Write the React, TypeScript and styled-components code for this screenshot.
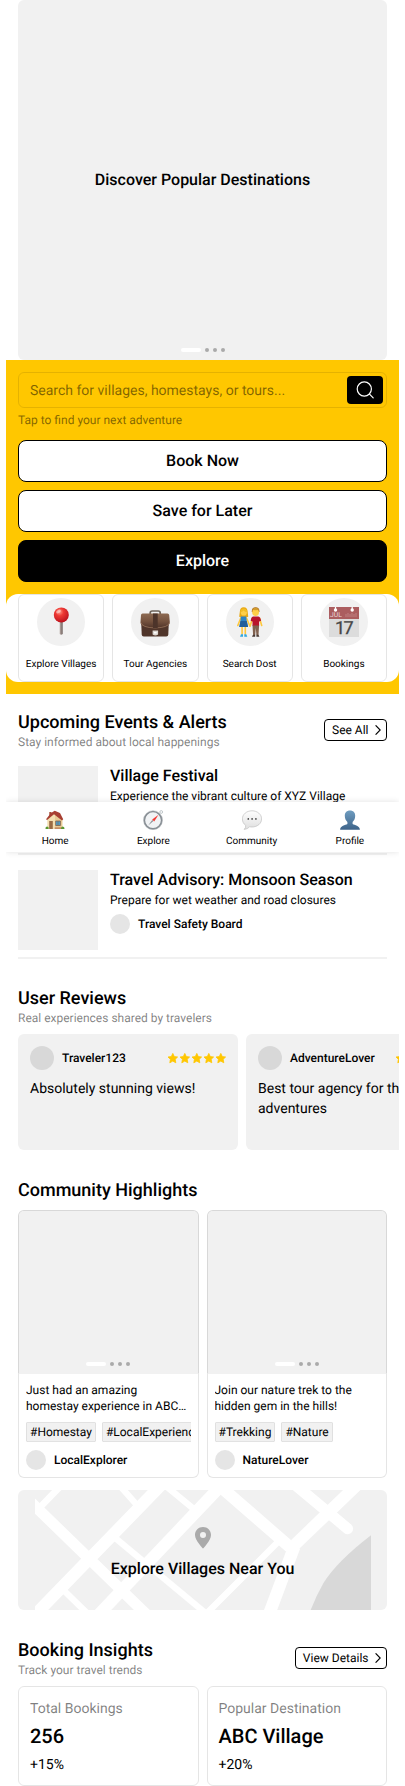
import React from "react";
import styled, { createGlobalStyle, css } from "styled-components";

const GlobalStyle = createGlobalStyle`
  * { box-sizing: border-box; }
  body {
    margin: 0;
    background: #fff;
    color: #000;
    font-family: Roboto, "Liberation Sans", sans-serif;
    font-size: 14px;
    line-height: 20px;
    text-rendering: geometricPrecision;
    -webkit-font-smoothing: antialiased;
  }
  button { font-family: inherit; color: inherit; margin: 0; padding: 0; text-rendering: inherit; }
  h2, h3, p { margin: 0; }
`;

const Page = styled.div`
  position: relative;
  width: 393px;
  height: 1786px;
  margin: 0 auto;
  overflow: hidden;
`;

const Hero = styled.section`
  position: relative;
  display: flex;
  align-items: center;
  justify-content: center;
  height: 360px;
  margin: 0 12px;
  border-radius: 6px;
  background: #f1f1f1;
  font-size: 16px;
  line-height: 24px;
  font-weight: 500;
`;

const Dots = styled.div`
  position: absolute;
  left: 0;
  right: 0;
  bottom: 8px;
  display: flex;
  justify-content: center;
  gap: 4px;
`;

const Dot = styled.span<{ $active?: boolean }>`
  width: ${(p) => (p.$active ? 20 : 4)}px;
  height: 4px;
  border-radius: 2px;
  background: ${(p) => (p.$active ? "#fff" : "#aaa")};
`;

const SearchPanel = styled.section`
  padding: 12px 0;
  background: #ffc700;
`;

const SearchBody = styled.div`
  display: flex;
  flex-direction: column;
  padding: 0 12px;
`;

const SearchField = styled.div`
  display: flex;
  align-items: center;
  justify-content: space-between;
  height: 36px;
  padding: 0 3px 0 11px;
  border: 1px solid rgba(0, 0, 0, 0.1);
  border-radius: 6px;
  color: rgba(0, 0, 0, 0.5);
`;

const Placeholder = styled.span`
  padding-top: 2px;
`;

const SearchButton = styled.button`
  display: flex;
  align-items: center;
  justify-content: center;
  width: 36px;
  height: 28px;
  border: 0;
  border-radius: 4px;
  background: #000;
`;

const Helper = styled.p`
  margin-top: 4px;
  font-size: 12px;
  line-height: 16px;
  color: rgba(0, 0, 0, 0.5);
`;

const Actions = styled.div`
  display: flex;
  flex-direction: column;
  gap: 8px;
  margin: 12px 0;
`;

const ActionButton = styled.button<{ $dark?: boolean }>`
  height: 42px;
  border: 1px solid #000;
  border-radius: 8px;
  background: ${(p) => (p.$dark ? "#000" : "#fff")};
  color: ${(p) => (p.$dark ? "#fff" : "#000")};
  font-size: 16px;
  line-height: 24px;
  font-weight: 500;
`;

const Shortcuts = styled.div`
  display: grid;
  grid-template-columns: repeat(4, 1fr);
  gap: 8px;
  height: 88px;
  padding: 0 12px;
  border-radius: 12px;
  background: #fff;
`;

const Shortcut = styled.div`
  display: flex;
  flex-direction: column;
  align-items: center;
  gap: 12px;
  padding-top: 3px;
  border: 1px solid rgba(0, 0, 0, 0.1);
  border-radius: 6px;
  font-size: 10px;
  line-height: 14px;
  white-space: nowrap;
`;

const ShortcutIcon = styled.div`
  display: flex;
  align-items: center;
  justify-content: center;
  width: 48px;
  height: 48px;
  border-radius: 50%;
  background: #f1f1f1;
`;

const Section = styled.section<{ $top: number }>`
  padding: ${(p) => p.$top}px 12px 0;
`;

const SectionHead = styled.header`
  display: flex;
  align-items: center;
  justify-content: space-between;
`;

const SectionTitle = styled.h2`
  height: 24px;
  padding-top: 1px;
  font-size: 18px;
  line-height: 24px;
  font-weight: 500;
`;

const SectionNote = styled.p`
  font-size: 12px;
  line-height: 16px;
  color: rgba(0, 0, 0, 0.5);
`;

const LinkButton = styled.button`
  display: flex;
  align-items: center;
  gap: 6px;
  height: 22px;
  padding: 0 5.5px 0 7px;
  border: 1px solid #000;
  border-radius: 4px;
  background: #fff;
  font-size: 12px;
  line-height: 16px;
`;

const EventRow = styled.article`
  display: flex;
  gap: 12px;
  margin-bottom: 3px;
  padding: 12px 0 7px;
  border-bottom: 2px solid #f1f1f1;
`;

const EventList = styled.div`
  padding-top: 4px;
`;

const Thumb = styled.div`
  width: 80px;
  height: 80px;
  background: #f1f1f1;
`;

const EventTitle = styled.h3`
  font-size: 16px;
  line-height: 20px;
  font-weight: 500;
`;

const EventText = styled.p`
  margin-top: 2px;
  font-size: 12px;
  line-height: 16px;
`;

const Author = styled.div<{ $top: number }>`
  display: flex;
  align-items: center;
  gap: 8px;
  margin-top: ${(p) => p.$top}px;
  font-size: 12px;
  line-height: 16px;
  font-weight: 500;
`;

const Avatar = styled.span<{ $size: number; $color: string }>`
  flex: none;
  width: ${(p) => p.$size}px;
  height: ${(p) => p.$size}px;
  border-radius: 50%;
  background: ${(p) => p.$color};
`;

const ReviewStrip = styled.div`
  display: flex;
  gap: 8px;
  margin: 8px -12px 0 0;
  overflow: hidden;
`;

const ReviewCard = styled.article`
  flex: none;
  width: 220px;
  height: 116px;
  padding: 12px;
  border-radius: 6px;
  background: #f1f1f1;
`;

const ReviewHead = styled.div`
  display: flex;
  align-items: center;
  justify-content: space-between;
  margin-bottom: 9px;
`;

const Pair = styled.div<{ $top: number }>`
  display: grid;
  grid-template-columns: repeat(2, minmax(0, 1fr));
  gap: 8px;
  margin-top: ${(p) => p.$top}px;
`;

const cardFrame = css`
  border: 1px solid rgba(0, 0, 0, 0.1);
  border-radius: 6px;
`;

const PostCard = styled.article`
  ${cardFrame}
  height: 268px;
  overflow: hidden;
  background: linear-gradient(#f1f1f1, #f1f1f1) 0 0 / 100% 163px no-repeat border-box;
`;

const PostImage = styled.div`
  position: relative;
  height: 163px;
  background: #f1f1f1;
`;

const PostBody = styled.div`
  padding: 8px 7px;
`;

const PostText = styled.p`
  display: -webkit-box;
  -webkit-line-clamp: 2;
  -webkit-box-orient: vertical;
  overflow: hidden;
  font-size: 12px;
  line-height: 16px;
`;

const Tags = styled.div`
  display: flex;
  gap: 6px;
  margin-top: 8px;
  overflow: hidden;
`;

const Tag = styled.span`
  flex: none;
  height: 20px;
  padding: 2px 4px;
  border-radius: 2px;
  background: #f1f1f1;
  box-shadow: inset 0 0 0 0.6px rgba(0, 0, 0, 0.12);
  font-size: 12px;
  line-height: 16px;
`;

const MapCard = styled.section`
  position: relative;
  display: flex;
  flex-direction: column;
  align-items: center;
  height: 120px;
  margin: 12px 12px 0;
  padding-top: 36px;
  border-radius: 6px;
  overflow: hidden;
  background: #f1f1f1;
`;

const MapArt = styled.svg`
  position: absolute;
  inset: 0;
  width: 100%;
  height: 100%;
`;

const MapLabel = styled.p`
  position: relative;
  margin-top: 7px;
  font-size: 16px;
  line-height: 24px;
  font-weight: 500;
`;

const MapPin = styled.svg`
  position: relative;
`;

const StatCard = styled.article`
  ${cardFrame}
  display: flex;
  flex-direction: column;
  height: 100px;
  padding: 12px 11px 0;
`;

const StatLabel = styled.p`
  color: rgba(0, 0, 0, 0.5);
`;

const StatValue = styled.p`
  margin: 3px 0 5px;
  font-size: 20px;
  line-height: 28px;
  font-weight: 500;
`;

const BottomNav = styled.nav`
  position: absolute;
  top: 802px;
  left: 0;
  right: 0;
  display: grid;
  grid-template-columns: repeat(4, 1fr);
  height: 50px;
  background: #fff;
  box-shadow: 0 0 6px rgba(0, 0, 0, 0.12);
`;

const NavItem = styled.a`
  display: flex;
  flex-direction: column;
  align-items: center;
  gap: 5px;
  padding-top: 8px;
  font-size: 10px;
  line-height: 14px;
`;

const PushPin = () => (
  <svg width="30" height="30" viewBox="0 0 30 30">
    <defs>
      <radialGradient id="pinHead" cx=".38" cy=".3" r=".75">
        <stop offset="0" stopColor="#ff9c8c" />
        <stop offset=".35" stopColor="#ee3a34" />
        <stop offset="1" stopColor="#b90f1c" />
      </radialGradient>
      <linearGradient id="pinStem">
        <stop offset="0" stopColor="#b9aaa5" />
        <stop offset="1" stopColor="#6d605d" />
      </linearGradient>
    </defs>
    <path d="M13.700 13h3v14q-1.500 1.600-3 0z" fill="url(#pinStem)" />
    <circle cx="15.300" cy="7.900" r="7.500" fill="url(#pinHead)" />
    <ellipse cx="12.500" cy="4.500" rx="2.600" ry="1.500" fill="#fff" opacity=".45" transform="rotate(-30 12.500 4.500)" />
  </svg>
);

const Briefcase = () => (
  <svg width="30" height="30" viewBox="0 0 30 30">
    <defs>
      <linearGradient id="caseBody" x2="0" y2="1">
        <stop offset="0" stopColor="#8d6a52" />
        <stop offset=".5" stopColor="#75523e" />
        <stop offset="1" stopColor="#4b3026" />
      </linearGradient>
    </defs>
    <path d="M10.200 8V6q0-2 2-2h6q2 0 2 2v2" fill="none" stroke="#6c6259" strokeWidth="1.700" />
    <path d="M1.200 15h27.600l-.5 12.500q-.1 2-2 2H3.700q-1.900 0-2-2z" fill="#50352a" />
    <path d="M2.500 6.500h25q1.500 0 1.700 1.500l.6 7q0 6.500-14.600 7Q.5 21.500.5 15L1 8q.1-1.500 1.500-1.500z" fill="url(#caseBody)" />
    <path d="M.8 15.500q1 5 14.400 5.500 13.500-.5 14.400-5.500" fill="none" stroke="#a07b62" strokeWidth=".7" />
    <path d="M13 6.500h4.700V21H13z" fill="#4d342a" />
    <path d="M12.600 23.500h5.500v4q-2.700 2-5.500 0z" fill="#ddd8d2" />
    <path d="M14 25h2.600v1.500H14z" fill="#fff" />
  </svg>
);

const Couple = () => (
  <svg width="30" height="30" viewBox="0 0 30 30">
    <path d="M4.800 5q0-4.500 3.900-4.700 3.900 0 4 4.700l.5 4.700q-4.500 2-9 0z" fill="#e9a914" />
    <circle cx="8.800" cy="5.500" r="3.100" fill="#ffcf48" />
    <path d="M5.400 5.200Q5.800 1.600 8.600 1.500q3.200-.2 3.700 3.800-2.500-.2-3.800-1.900-1 1.600-3.100 1.800z" fill="#f3bd25" />
    <path d="M5.800 11 2.800 18.500M11.500 11l3.300 8" fill="none" stroke="#ffc83d" strokeWidth="1.600" strokeLinecap="round" />
    <path d="M5.800 9.600h5.400l.6 4.400 1.300 6H4.300L5.400 14z" fill="#2e83c5" />
    <path d="M5.500 14h6.200l1.400 6H4.300z" fill="#225f9b" />
    <path d="M7.100 20v7.500M10.300 20v7.500" stroke="#ffc83d" strokeWidth="1.600" />
    <path d="M6 27.200h2v2.600H5zM9.300 27.200h2l1 2.600h-3z" fill="#31a8e0" />
    <path d="M16.800 5q-.4-4.700 3.800-4.800 4.200.1 3.800 4.800z" fill="#a96b20" />
    <circle cx="20.600" cy="5.500" r="3.400" fill="#ffcf48" />
    <path d="M17 4.700q.3-4 3.600-4 3.400 0 3.600 4l-1.100-1.700q-2.700.3-5 0z" fill="#d29b2d" />
    <path d="m17.500 11-2.300 8M24.500 11l2.200 7.500" fill="none" stroke="#ffc83d" strokeWidth="1.600" strokeLinecap="round" />
    <path d="M18 9.600h5.500q1.800.3 2.600 4.200l-2 .7V19h-6.600v-4.500l-1.800-.7q.5-3.900 2.300-4.200z" fill="#b9142b" />
    <path d="M17.500 18.500h6.600l-.6 9.500h-2.100l-.6-7-.6 7h-2.100z" fill="#80614f" />
    <path d="M18 27.700h2.200v2h-3.200zM21.400 27.700h2.100l.9 2h-3z" fill="#493a34" />
  </svg>
);

const CalendarText = styled.text`
  font-family: Roboto, sans-serif;
`;

const Calendar = () => (
  <svg width="30" height="30" viewBox="0 0 30 30">
    <path d="M0 0h30v30H0z" fill="#dcdcdc" />
    <path d="M0 0h30v12H0z" fill="#ab5d5f" />
    <circle cx="6.500" cy="3" r="1.700" fill="#fff" />
    <circle cx="23.200" cy="3" r="1.700" fill="#fff" />
    <path d="M6.500 0v3M23.200 0v3" stroke="#fff" strokeWidth="1.200" />
    <CalendarText x="1" y="10.300" fontSize="6.800" fill="#ead7d7">JUL</CalendarText>
    <path d="M17 7v3M19 6v4M21 7v3M23 6v4M25 7v3M27 6v4" stroke="#c58b8c" strokeWidth=".8" />
    <CalendarText x="14.500" y="27.300" fontSize="18" textAnchor="middle" letterSpacing="-1.500" stroke="#454545" strokeWidth=".3" fill="#454545">17</CalendarText>
  </svg>
);

const House = () => (
  <svg width="20" height="20" viewBox="0 0 20 20">
    <path d="M4.300 2h2.200v5H4.300z" fill="#a44b36" />
    <path d="M2.300 8.500 9 2.500l8.300 6V19h-15z" fill="#f4dfb1" />
    <path d="M10 3.500 17.300 9v10H10z" fill="#e8ca95" />
    <path d="M9.700.7 6 3 1 9.200l1.100.8L9 4.300l8 6.200 1.200-1.200L15 3z" fill="#a83f32" />
    <path d="M4.200 11h3.600v8H4.200z" fill="#9b6b44" />
    <path d="M10.700 11h4.700v4.500h-4.700z" fill="#4b9fce" stroke="#8a6244" strokeWidth=".8" />
    <path d="M13 11v4.500" stroke="#8a6244" strokeWidth=".6" />
    <path d="M9.700 17.300h8V19h-8z" fill="#c58c60" />
    <path d="M.5 19q-.3-2.800 1.700-2.600Q4 16.500 3.700 19zM16 19q0-2.700 1.800-2.600 1.900 0 1.700 2.600z" fill="#5b9832" />
  </svg>
);

const Compass = () => (
  <svg width="20" height="20" viewBox="0 0 20 20">
    <circle cx="18.200" cy="2" r="1.400" fill="none" stroke="#9ba4aa" strokeWidth=".6" />
    <circle cx="10" cy="10.200" r="8.700" fill="#f1f3f5" stroke="#858c92" strokeWidth="1.700" />
    <circle cx="10" cy="10.200" r="9.500" fill="none" stroke="#b8bdc1" strokeWidth=".5" />
    <path d="m5.200 15.500 4-5.600 1.200 1.200z" fill="#8a8f94" />
    <path d="m15.500 4.800-6.300 4.600 2 2z" fill="#f33b35" />
  </svg>
);

const Bubble = () => (
  <svg width="20" height="20" viewBox="0 0 20 20">
    <defs>
      <linearGradient id="bubbleFill" x2="0" y2="1">
        <stop offset="0" stopColor="#fff" />
        <stop offset="1" stopColor="#dedede" />
      </linearGradient>
    </defs>
    <path d="M10 .8c5.300 0 9.600 3.500 9.600 8.100s-4.300 8.100-9.600 8.100q-1.200 0-2.500-.2-1.700 2.400-5.300 2.600 1.800-1.900 1.500-4C1.600 13.900.4 11.600.4 8.900.4 4.300 4.700.8 10 .8z" fill="url(#bubbleFill)" stroke="#c0c0c0" strokeWidth=".7" />
    <circle cx="6.300" cy="8.900" r=".85" fill="#444" />
    <circle cx="10.100" cy="8.900" r=".85" fill="#444" />
    <circle cx="13.900" cy="8.900" r=".85" fill="#444" />
  </svg>
);

const Person = () => (
  <svg width="20" height="20" viewBox="0 0 20 20">
    <defs>
      <linearGradient id="personFill" x2="0" y2="1">
        <stop offset="0" stopColor="#6f9dc0" />
        <stop offset="1" stopColor="#3d6389" />
      </linearGradient>
    </defs>
    <path d="M10 .4c3.300 0 5.200 2.100 5.200 5.300 0 2.800-1.100 5-2.600 6.200v2.200c2.200 1.300 7.100 1.600 7.300 5.700H.1c.2-4.100 5.100-4.400 7.300-5.700v-2.200C5.900 10.700 4.800 8.500 4.800 5.700 4.800 2.500 6.700.4 10 .4z" fill="url(#personFill)" />
  </svg>
);

const SearchIcon = () => (
  <svg width="20" height="20" viewBox="0 0 20 20" fill="none" stroke="#fff" strokeWidth="1.200" strokeLinecap="round">
    <circle cx="9.300" cy="9" r="7.100" />
    <path d="m14.500 14.200 3.700 3.700" />
  </svg>
);

const Chevron = () => (
  <svg width="6" height="10" viewBox="0 0 6 10" fill="none" stroke="#000" strokeWidth="1.100">
    <path d="M.6.3 5.200 5 .6 9.700" />
  </svg>
);

const StarRow = styled.div`
  display: flex;
`;

const Stars = () => (
  <StarRow>
    {[0, 1, 2, 3, 4].map((i) => (
      <svg key={i} width="12" height="12" viewBox="0 0 12 12">
        <path
          d="M6.800 1.400 8.300 4.600l3.300.4-2.400 2.300.6 3.500-3-1.700-3 1.700.6-3.500L2 5l3.300-.4z"
          fill="#ffc700"
          stroke="#ffc700"
          strokeWidth=".8"
          strokeLinejoin="round"
        />
      </svg>
    ))}
  </StarRow>
);

const Pager = () => (
  <Dots>
    <Dot $active />
    <Dot />
    <Dot />
    <Dot />
  </Dots>
);

const MapDrawing = () => (
  <MapArt viewBox="54 30 1107 360" preserveAspectRatio="none">
    <defs>
      <clipPath id="mapArea">
        <path d="M105 30h1008v360H105z" />
      </clipPath>
    </defs>
    <g clipPath="url(#mapArea)" fill="none" stroke="#fff">
      <path d="M80 54 440 404" strokeWidth="33" />
      <path d="M95 415 490 8" strokeWidth="36" />
      <path d="M290 410 665 15" strokeWidth="36" />
      <path d="M650 10 880 210" strokeWidth="36" />
      <path d="M868 210 1072 14" strokeWidth="36" />
      <path d="M880 10 1043 146" strokeWidth="33" strokeLinecap="round" />
      <path d="M883 200 808 400" strokeWidth="37" />
      <path d="M180 20 118 84" strokeWidth="20" />
      <path d="M362 20 408 72" strokeWidth="19" />
      <path d="M500 20 585 90" strokeWidth="19" />
      <path d="M335 165 620 402" strokeWidth="19" />
      <path d="M836 184 620 400" strokeWidth="19" />
      <path d="M190 330 262 400" strokeWidth="19" />
    </g>
    <path d="M1113 166Q1010 245 970 310 950 345 932 390h181z" fill="#d8d8d8" />
  </MapArt>
);

const shortcuts = [
  { label: "Explore Villages", icon: <PushPin /> },
  { label: "Tour Agencies", icon: <Briefcase /> },
  { label: "Search Dost", icon: <Couple /> },
  { label: "Bookings", icon: <Calendar /> },
];

const events = [
  { title: "Village Festival", text: "Experience the vibrant culture of XYZ Village", author: "Village Council" },
  { title: "Travel Advisory: Monsoon Season", text: "Prepare for wet weather and road closures", author: "Travel Safety Board" },
];

const reviews = [
  { name: "Traveler123", text: "Absolutely stunning views!" },
  { name: "AdventureLover", text: "Best tour agency for thrilling adventures" },
];

const posts = [
  { text: "Just had an amazing homestay experience in ABC Village!", tags: ["#Homestay", "#LocalExperience"], author: "LocalExplorer" },
  { text: "Join our nature trek to the hidden gem in the hills!", tags: ["#Trekking", "#Nature"], author: "NatureLover" },
];

const stats = [
  { label: "Total Bookings", value: "256", change: "+15%" },
  { label: "Popular Destination", value: "ABC Village", change: "+20%" },
];

const navItems = [
  { label: "Home", icon: <House /> },
  { label: "Explore", icon: <Compass /> },
  { label: "Community", icon: <Bubble /> },
  { label: "Profile", icon: <Person /> },
];

export default function App() {
  return (
    <>
      <GlobalStyle />
      <Page>
        <Hero>
          Discover Popular Destinations
          <Pager />
        </Hero>

        <SearchPanel>
          <SearchBody>
            <SearchField>
              <Placeholder>Search for villages, homestays, or tours...</Placeholder>
              <SearchButton aria-label="Search">
                <SearchIcon />
              </SearchButton>
            </SearchField>
            <Helper>Tap to find your next adventure</Helper>
            <Actions>
              <ActionButton>Book Now</ActionButton>
              <ActionButton>Save for Later</ActionButton>
              <ActionButton $dark>Explore</ActionButton>
            </Actions>
          </SearchBody>
          <Shortcuts>
            {shortcuts.map((s) => (
              <Shortcut key={s.label}>
                <ShortcutIcon>{s.icon}</ShortcutIcon>
                {s.label}
              </Shortcut>
            ))}
          </Shortcuts>
        </SearchPanel>

        <Section $top={16}>
          <SectionHead>
            <div>
              <SectionTitle>Upcoming Events &amp; Alerts</SectionTitle>
              <SectionNote>Stay informed about local happenings</SectionNote>
            </div>
            <LinkButton>
              See All <Chevron />
            </LinkButton>
          </SectionHead>
          <EventList>
            {events.map((e) => (
              <EventRow key={e.title}>
                <Thumb />
                <div>
                  <EventTitle>{e.title}</EventTitle>
                  <EventText>{e.text}</EventText>
                  <Author $top={6}>
                    <Avatar $size={20} $color="#e5e5e5" />
                    {e.author}
                  </Author>
                </div>
              </EventRow>
            ))}
          </EventList>
        </Section>

        <Section $top={24}>
          <SectionTitle>User Reviews</SectionTitle>
          <SectionNote>Real experiences shared by travelers</SectionNote>
          <ReviewStrip>
            {reviews.map((r) => (
              <ReviewCard key={r.name}>
                <ReviewHead>
                  <Author $top={0}>
                    <Avatar $size={24} $color="#d8d8d8" />
                    {r.name}
                  </Author>
                  <Stars />
                </ReviewHead>
                {r.text}
              </ReviewCard>
            ))}
          </ReviewStrip>
        </Section>

        <Section $top={28}>
          <SectionTitle>Community Highlights</SectionTitle>
          <Pair $top={8}>
            {posts.map((p) => (
              <PostCard key={p.author}>
                <PostImage>
                  <Pager />
                </PostImage>
                <PostBody>
                  <PostText>{p.text}</PostText>
                  <Tags>
                    {p.tags.map((t) => (
                      <Tag key={t}>{t}</Tag>
                    ))}
                  </Tags>
                  <Author $top={8}>
                    <Avatar $size={20} $color="#e5e5e5" />
                    {p.author}
                  </Author>
                </PostBody>
              </PostCard>
            ))}
          </Pair>
        </Section>

        <MapCard>
          <MapDrawing />
          <MapPin width="18" height="24" viewBox="0 0 18 24">
            <path
              d="M9 1C4.500 1 1 4.500 1 9c0 5.500 8 13.600 8 13.600S17 14.500 17 9c0-4.500-3.500-8-8-8zm0 11a3 3 0 1 1 0-6 3 3 0 0 1 0 6z"
              fill="#aaa"
            />
          </MapPin>
          <MapLabel>Explore Villages Near You</MapLabel>
        </MapCard>

        <Section $top={28}>
          <SectionHead>
            <div>
              <SectionTitle>Booking Insights</SectionTitle>
              <SectionNote>Track your travel trends</SectionNote>
            </div>
            <LinkButton>
              View Details <Chevron />
            </LinkButton>
          </SectionHead>
          <Pair $top={8}>
            {stats.map((s) => (
              <StatCard key={s.label}>
                <StatLabel>{s.label}</StatLabel>
                <StatValue>{s.value}</StatValue>
                <p>{s.change}</p>
              </StatCard>
            ))}
          </Pair>
        </Section>

        <BottomNav>
          {navItems.map((n) => (
            <NavItem key={n.label}>
              {n.icon}
              {n.label}
            </NavItem>
          ))}
        </BottomNav>
      </Page>
    </>
  );
}
